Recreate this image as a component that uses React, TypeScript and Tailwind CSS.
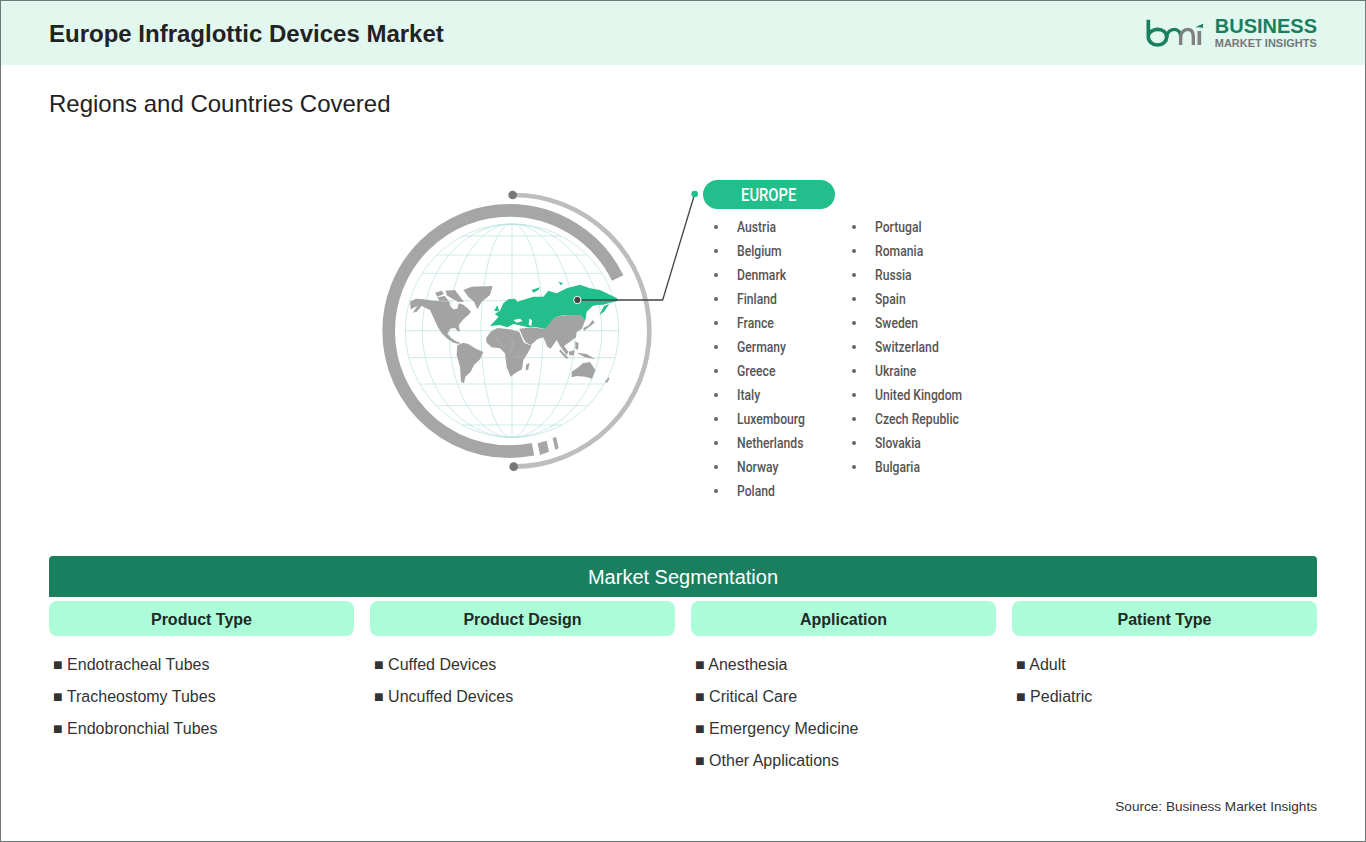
const left = ["Austria","Belgium","Denmark","Finland","France","Germany","Greece","Italy","Luxembourg","Netherlands","Norway","Poland"];
const right = ["Portugal","Romania","Russia","Spain","Sweden","Switzerland","Ukraine","United Kingdom","Czech Republic","Slovakia","Bulgaria"];
const segs = [
  { t: "Product Type", items: ["Endotracheal Tubes","Tracheostomy Tubes","Endobronchial Tubes"] },
  { t: "Product Design", items: ["Cuffed Devices","Uncuffed Devices"] },
  { t: "Application", items: ["Anesthesia","Critical Care","Emergency Medicine","Other Applications"] },
  { t: "Patient Type", items: ["Adult","Pediatric"] },
];

function Logo() {
  return (
    <svg width="70" height="45" viewBox="0 0 210 135" fill="none" className="shrink-0">
      <path d="M25 26V78A27 24 0 0 0 52 102C70 102 80 90 80 78C80 65 70 55 52 55C42 55 30 62 25 72" stroke="#1a7f5f" strokeWidth="11" />
      <path d="M80 80C80 65 90 55 103 55C115 55 122 65 122 78" stroke="#1a7f5f" strokeWidth="10" />
      <path d="M122 78V102M122 78C122 65 132 55 143 55C155 55 160 65 160 78V102" stroke="#808080" strokeWidth="10" />
      <path d="M178 60V102" stroke="#808080" strokeWidth="11" />
      <path d="M166 50C172 44 180 42 190 38L188 52C182 48 174 48 166 50Z" fill="#1a7f5f" />
    </svg>
  );
}

function Globe() {
  const parallels = [168, 225, 280, 362, 452, 533, 612, 677, 735];
  const meridians = [269, 189, 93];
  return (
    <svg width="333" height="300" viewBox="0 0 999 900" fill="none" className="shrink-0">
      <defs>
        <clipPath id="g"><circle cx="426" cy="452" r="320" /></clipPath>
      </defs>
      <path d="M743 294A362 362 0 0 0 418 91A362 362 0 0 0 56 453A362 362 0 0 0 489 808" stroke="#a6a6a6" strokeWidth="38" />
      <polygon points="503,790 530,782 537,815 510,825" fill="#a6a6a6" />
      <polygon points="548,775 558,770 566,804 556,810" fill="#a6a6a6" />
      <path d="M428 45A408 408 0 0 1 838 452A408 408 0 0 1 431 860" stroke="#bdbdbd" strokeWidth="14" />
      <circle cx="428" cy="45" r="13" fill="#777" />
      <circle cx="431" cy="860" r="13" fill="#777" />
      <g stroke="#b5e0dc" strokeWidth="2">
        <circle cx="426" cy="452" r="320" />
        {meridians.map((r) => <ellipse key={r} cx="426" cy="452" rx={r} ry="320" />)}
        <path d="M426 132V772" />
        <g clipPath="url(#g)">
          {parallels.map((y) => <path key={y} d={`M100 ${y}H750`} />)}
        </g>
      </g>
      <g transform="translate(90 270)" fill="#a3a3a3">
        <path d="M30 95L48 86L70 88L100 92L130 94L148 94L150 108L160 118L172 116L176 100L190 104L202 114L213 125L205 135L190 148L176 165L180 186L172 182L165 174L150 176L142 192L155 205L168 214L180 218L178 222L160 218L140 205L125 190L112 168L100 142L90 120L65 108L50 125L38 128L52 108L32 118Z" />
        <path d="M190 60L215 50L278 48L270 75L245 95L232 118L222 95L205 80Z" />
        <path d="M105 68L125 62L132 72L112 80Z" />
        <path d="M112 82L135 78L145 92L118 92Z" />
        <path d="M137 62L165 60L180 80L192 95L175 96L155 85L140 76Z" />
        <path d="M172 226L190 218L205 222L225 235L250 246L240 268L222 285L212 305L196 320L192 340L183 335L180 290L170 255Z" />
        <path d="M258 205L272 185L292 174L330 178L358 186L372 218L395 228L380 254L370 270L366 298L345 310L332 320L320 292L315 250L300 235L275 232L260 218Z" />
        <path d="M378 285L388 278L385 298L377 302Z" />
        <path d="M358 176L395 172L430 176L465 142L490 136L540 135L555 152L546 176L530 186L528 202L510 215L492 228L505 245L500 256L480 228L470 210L452 236L442 230L430 202L412 208L392 226L376 216L366 196Z" />
        <path d="M578 150L584 158L566 172L552 182L550 174L566 166Z" />
        <path d="M480 238L506 264L498 266L478 244Z" />
        <path d="M506 245L524 240L522 256L508 256Z" />
        <path d="M526 214L536 220L534 240L526 236Z" />
        <path d="M530 248L560 252L586 268L555 262Z" />
        <path d="M515 305L535 292L548 280L570 276L586 300L576 326L555 320L530 318L515 322Z" />
        <path d="M615 335L626 322L628 328L620 340Z" />
        <g fill="#22bf8c">
          <path d="M270 168L285 152L296 140L284 132L300 122L310 100L325 88L345 86L352 95L400 80L430 80L445 62L470 70L500 55L540 44L570 55L600 60L650 84L656 92L625 100L610 104L590 105L578 108L560 125L556 152L540 135L515 136L490 135L465 142L435 176L400 170L385 172L340 162L322 172L300 165Z" />
          <path d="M395 60L420 52L415 60L400 68Z" />
          <path d="M475 35L490 40L482 45Z" />
          <path d="M598 135L612 108L628 102L612 125Z" />
          <path d="M282 122L292 106L298 124Z" />
        </g>
        <path d="M340 150L360 146L368 153L350 158Z" fill="#fff" />
        <path d="M388 146L396 150L394 168L386 164Z" fill="#fff" />
        <path d="M320 190L340 215L332 250M285 200L310 232M345 260L365 262" stroke="#bdbdbd" strokeWidth="1.5" fill="none" />
      </g>
      <path d="M622 360H878L974 42" stroke="#444" strokeWidth="4" />
      <circle cx="622" cy="360" r="11" fill="#444" stroke="#fff" strokeWidth="3" />
      <circle cx="974" cy="42" r="10" fill="#22bf8c" />
    </svg>
  );
}

function Col({ names }: { names: string[] }) {
  return (
    <ul className="w-[138px]">
      {names.map((n) => (
        <li key={n} className="flex h-6 items-center whitespace-nowrap text-[#555] font-medium text-sm [font-family:'Roboto',sans-serif]">
          <span className="mr-[19px] ml-[11px] block h-1 w-1 shrink-0 rounded-full bg-[#666]" />
          <span className="inline-block origin-left scale-x-[0.87]">{n}</span>
        </li>
      ))}
    </ul>
  );
}

export default function App() {
  return (
    <div className="relative h-[842px] w-[1366px] overflow-hidden border border-[#6f7a78] bg-white text-[#222] [font-family:'Liberation_Sans',Arial,sans-serif]">
      <header className="flex h-16 items-center justify-between bg-[#e2f8ef] pl-12 pr-12">
        <h1 className="pt-0.5 text-2xl font-bold text-[#222]">Europe Infraglottic Devices Market</h1>
        <div className="flex items-center gap-[5px]">
          <Logo />
          <div className="flex flex-col font-bold">
            <span className="text-[20px] leading-[20px] text-[#1a7f5f]">BUSINESS</span>
            <span className="text-[11px] leading-[14px] text-[#777]">MARKET INSIGHTS</span>
          </div>
        </div>
      </header>
      <h2 className="mt-[23px] pl-12 text-2xl leading-8 text-[#222]">Regions and Countries Covered</h2>
      <section className="mt-[60px] flex pl-[369px]">
        <Globe />
        <div>
          <div className="flex h-[29px] w-[132px] items-center justify-center rounded-full bg-[#22bf8c] text-lg font-medium text-white [font-family:'Roboto',sans-serif]">
            <span className="inline-block scale-x-[0.82]">EUROPE</span>
          </div>
          <div className="mt-[6px] flex">
            <Col names={left} />
            <Col names={right} />
          </div>
        </div>
      </section>
      <section className="absolute left-12 right-12 top-[555px]">
        <div className="flex h-[41px] items-center justify-center rounded-t bg-[#1a7f5f] text-xl text-white">Market Segmentation</div>
        <div className="mt-1 grid grid-cols-4 gap-4">
          {segs.map((s) => (
            <div key={s.t}>
              <div className="flex h-[35px] items-center justify-center rounded-lg bg-[#adfcd9] pt-0.5 font-bold text-[#1d2b26]">{s.t}</div>
              <ul className="mt-[13px] pl-1">
                {s.items.map((i) => <li key={i} className="h-8 leading-8 text-[#333]">■ {i}</li>)}
              </ul>
            </div>
          ))}
        </div>
      </section>
      <p className="absolute right-12 top-[796px] text-[13.6px] text-[#333]">Source: Business Market Insights</p>
    </div>
  );
}
